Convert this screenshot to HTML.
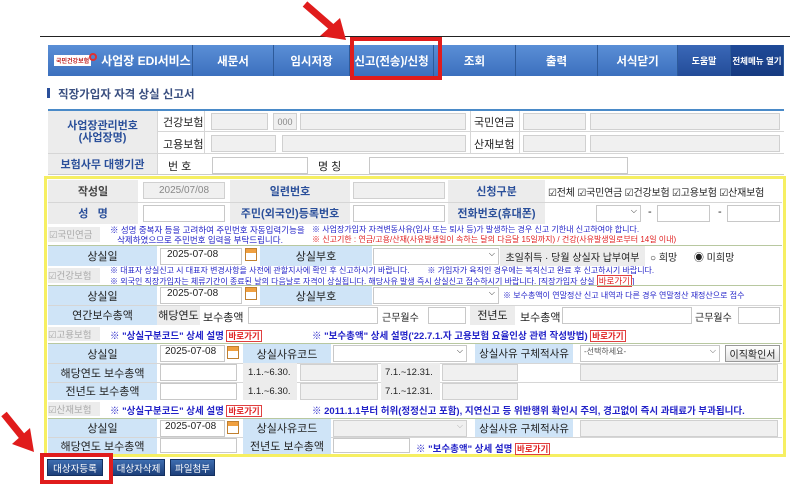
<!DOCTYPE html>
<html><head><meta charset="utf-8"><style>
*{margin:0;padding:0;box-sizing:border-box}
body{width:790px;height:484px;background:#fff;position:relative;overflow:hidden;font-family:"Liberation Sans","Noto Sans CJK KR","NanumGothic",sans-serif;font-size:11px;color:#222}
.a{position:absolute;white-space:nowrap}
.nav{top:45px;height:31px;color:#fff;font-size:11.5px;font-weight:bold;display:flex;align-items:center;justify-content:center;border-right:1px solid #2d5a9a;background:linear-gradient(#5a8fd6,#3c70be)}
.g{background:#ececec}
.lb{background:#cfe4f7}
.c{display:flex;align-items:center;justify-content:center}
.in{border:1px solid #c8c8c8;background:#fff;height:17px}
.ind{border:1px solid #d0d0d0;background:#f0f0f0;height:17px}
.bl{color:#2a4f9a;font-weight:bold}
.hl{border-bottom:1px solid #d6d6d6}
.n{font-size:8.5px;color:#2323c8;white-space:nowrap}
.r{color:#e02020}
.ck{font-size:9.5px;color:#aaa;background:#ececec}
.go{border:1px solid #e04040;color:#e02020;font-size:8.5px;padding:0 1px}
.cal{width:12px;height:13px;background:linear-gradient(#f0a040 0 4px,#fff 4px);border:1px solid #c08030}
.btn{top:459px;height:17px;color:#fff;font-size:9.5px;background:linear-gradient(#3d6db0,#1d3f7a);border:1px solid #143060}
</style></head><body>
<div class="a" style="left:40px;top:36px;width:750px;height:1px;background:#222"></div>
<div class="a nav" style="left:48px;width:145px;justify-content:flex-start;padding-left:6px">
 <span style="font-size:6px;background:#fff;color:#c02020;padding:1px 2px;margin-right:4px">국민건강보험</span><span style="width:8px;height:8px;border:2px solid #e03030;border-radius:50%;margin:-8px 4px 0 -6px"></span><span style="font-size:12px">사업장 EDI서비스</span></div>
<div class="a nav" style="left:193px;width:81px">새문서</div>
<div class="a nav" style="left:274px;width:76px">임시저장</div>
<div class="a nav" style="left:350px;width:84px">신고(전송)/신청</div>
<div class="a nav" style="left:434px;width:82px">조회</div>
<div class="a nav" style="left:516px;width:82px">출력</div>
<div class="a nav" style="left:598px;width:80px">서식닫기</div>
<div class="a nav" style="left:678px;width:53px;font-size:9px;background:linear-gradient(#3a68b8,#234c98)">도움말</div>
<div class="a nav" style="left:731px;width:53px;font-size:8.5px;background:linear-gradient(#1f4a98,#163a80)">전체메뉴 열기</div>
<div class="a" style="left:350px;top:37px;width:92px;height:43px;border:4px solid #e01c1c"></div>
<div class="a" style="left:47px;top:88px;width:3px;height:10px;background:#2a4f9a"></div>
<div class="a bl" style="left:58px;top:86px;font-size:11.5px;color:#3a4f80">직장가입자 자격 상실 신고서</div>
<div class="a" style="left:48px;top:109px;width:736px;height:66px;border-top:2px solid #4a8ac8;border-bottom:1px solid #ccc"></div>
<div class="a g c bl" style="left:48px;top:111px;width:109px;height:42px;text-align:center;line-height:12px;white-space:normal">사업장관리번호<br>(사업장명)</div>
<div class="a g c bl" style="left:48px;top:153px;width:109px;height:21px">보험사무 대행기관</div>
<div class="a hl" style="left:157px;top:131px;width:627px"></div>
<div class="a hl" style="left:48px;top:153px;width:736px"></div>
<div class="a" style="left:157px;top:111px;width:1px;height:63px;background:#d6d6d6"></div>
<div class="a" style="left:204px;top:111px;width:1px;height:42px;background:#d6d6d6"></div>
<div class="a" style="left:470px;top:111px;width:1px;height:42px;background:#d6d6d6"></div>
<div class="a" style="left:519px;top:111px;width:1px;height:42px;background:#d6d6d6"></div>
<div class="a" style="left:163px;top:114px">건강보험</div>
<div class="a" style="left:163px;top:136px">고용보험</div>
<div class="a" style="left:474px;top:114px">국민연금</div>
<div class="a" style="left:474px;top:136px">산재보험</div>
<div class="a ind" style="left:211px;top:113px;width:57px"></div>
<div class="a ind c" style="left:273px;top:113px;width:24px;font-size:9px;color:#888">000</div>
<div class="a ind" style="left:300px;top:113px;width:166px"></div>
<div class="a ind" style="left:211px;top:135px;width:65px"></div>
<div class="a ind" style="left:282px;top:135px;width:184px"></div>
<div class="a ind" style="left:523px;top:113px;width:63px"></div>
<div class="a ind" style="left:590px;top:113px;width:190px"></div>
<div class="a ind" style="left:523px;top:135px;width:63px"></div>
<div class="a ind" style="left:590px;top:135px;width:190px"></div>
<div class="a" style="left:168px;top:158px">번 호</div>
<div class="a in" style="left:212px;top:157px;width:96px"></div>
<div class="a" style="left:318px;top:158px">명 칭</div>
<div class="a in" style="left:369px;top:157px;width:259px"></div>
<div class="a" style="left:44px;top:176px;width:742px;height:281px;border:3px solid #f6ef62"></div>
<div class="a g" style="left:48px;top:180px;width:734px;height:44px"></div>
<div class="a" style="left:138px;top:180px;width:92px;height:44px;background:#fff"></div>
<div class="a" style="left:350px;top:180px;width:98px;height:44px;background:#fff"></div>
<div class="a" style="left:545px;top:180px;width:237px;height:44px;background:#fff"></div>
<div class="a hl" style="left:48px;top:202px;width:734px"></div>
<div class="a c" style="left:48px;top:180px;width:90px;height:22px;font-weight:bold;color:#444">작성일</div>
<div class="a c bl" style="left:48px;top:202px;width:90px;height:22px">성 &nbsp;&nbsp;명</div>
<div class="a ind c" style="left:143px;top:182px;width:82px;color:#888;font-size:10px">2025/07/08</div>
<div class="a in" style="left:143px;top:205px;width:82px"></div>
<div class="a c bl" style="left:230px;top:180px;width:120px;height:22px">일련번호</div>
<div class="a c bl" style="left:230px;top:202px;width:120px;height:22px">주민(외국인)등록번호</div>
<div class="a ind" style="left:353px;top:182px;width:92px"></div>
<div class="a in" style="left:353px;top:205px;width:92px"></div>
<div class="a c bl" style="left:448px;top:180px;width:97px;height:22px">신청구분</div>
<div class="a c bl" style="left:448px;top:202px;width:97px;height:22px">전화번호(휴대폰)</div>
<div class="a" style="left:548px;top:184px;font-size:10px;letter-spacing:-0.2px">☑전체 ☑국민연금 ☑건강보험 ☑고용보험 ☑산재보험</div>
<div class="a in" style="left:596px;top:205px;width:45px;font-size:8px;text-align:right;padding-right:3px">⌵</div>
<div class="a" style="left:648px;top:206px">-</div>
<div class="a in" style="left:657px;top:205px;width:53px"></div>
<div class="a" style="left:718px;top:206px">-</div>
<div class="a in" style="left:727px;top:205px;width:53px"></div>
<div class="a ck" style="left:48px;top:227px;width:52px;height:15px;padding-left:1px">☑국민연금</div>
<div class="a n" style="left:110px;top:225px;line-height:10px">※ 성명 중복자 등을 고려하여 주민번호 자동입력기능을<br>&nbsp;&nbsp;&nbsp;삭제하였으므로 주민번호 입력을 부탁드립니다.</div>
<div class="a n" style="left:312px;top:225px;line-height:10px;font-size:8px">※ 사업장가입자 자격변동사유(입사 또는 퇴사 등)가 발생하는 경우 신고 기한내 신고하여야 합니다.<br><span class="r">※ 신고기한 : 연금/고용/산재(사유발생일이 속하는 달의 다음달 15일까지) / 건강(사유발생일로부터 14일 이내)</span></div>
<div class="a" style="left:48px;top:245px;width:734px;height:1px;background:#b8c8a0"></div>
<div class="a lb c" style="left:48px;top:246px;width:109px;height:20px">상실일</div>
<div class="a in" style="left:160px;top:248px;width:82px;padding-left:6px;font-size:10px">2025-07-08</div>
<div class="a cal" style="left:245px;top:248px"></div>
<div class="a lb c" style="left:260px;top:246px;width:112px;height:20px">상실부호</div>
<div class="a in" style="left:373px;top:248px;width:126px;font-size:8px;text-align:right;padding-right:3px">⌵</div>
<div class="a g c" style="left:500px;top:246px;width:145px;height:20px;font-size:10px">초일취득 · 당월 상실자 납부여부</div>
<div class="a" style="left:650px;top:249px;font-size:10px">○ 희망 &nbsp;&nbsp;&nbsp;&nbsp; ◉ 미희망</div>
<div class="a ck" style="left:48px;top:268px;width:52px;height:15px">☑건강보험</div>
<div class="a n" style="left:110px;top:266px;line-height:10px;font-size:8px">※ 대표자 상실신고 시 대표자 변경사항을 사전에 관할지사에 확인 후 신고하시기 바랍니다. &nbsp;&nbsp;&nbsp;&nbsp;&nbsp;&nbsp;&nbsp;※ 가입자가 육직인 경우에는 복직신고 완료 후 신고하시기 바랍니다.<br>※ 외국인 직장가입자는 체류기간이 종료된 날의 다음날로 자격이 상실됩니다. 해당사유 발생 즉시 상실신고 접수하시기 바랍니다. [직장가입자 상실 <span class="go">바로가기</span>]</div>
<div class="a" style="left:48px;top:285px;width:734px;height:1px;background:#b8c8a0"></div>
<div class="a lb c" style="left:48px;top:286px;width:109px;height:19px">상실일</div>
<div class="a in" style="left:160px;top:287px;width:82px;padding-left:6px;font-size:10px">2025-07-08</div>
<div class="a cal" style="left:245px;top:287px"></div>
<div class="a lb c" style="left:260px;top:286px;width:112px;height:19px">상실부호</div>
<div class="a in" style="left:373px;top:287px;width:126px;font-size:8px;text-align:right;padding-right:3px">⌵</div>
<div class="a n" style="left:503px;top:290px;font-size:8px">※ 보수총액이 연말정산 신고 내역과 다른 경우 연말정산 재정산으로 접수</div>
<div class="a lb c" style="left:48px;top:305px;width:109px;height:20px">연간보수총액</div>
<div class="a g c" style="left:157px;top:305px;width:43px;height:20px">해당연도</div>
<div class="a" style="left:203px;top:309px">보수총액</div>
<div class="a in" style="left:248px;top:307px;width:130px"></div>
<div class="a" style="left:382px;top:309px;font-size:10px">근무월수</div>
<div class="a in" style="left:428px;top:307px;width:38px"></div>
<div class="a g c" style="left:470px;top:305px;width:45px;height:20px">전년도</div>
<div class="a" style="left:520px;top:309px">보수총액</div>
<div class="a in" style="left:562px;top:307px;width:130px"></div>
<div class="a" style="left:695px;top:309px;font-size:10px">근무월수</div>
<div class="a in" style="left:738px;top:307px;width:42px"></div>
<div class="a hl" style="left:48px;top:305px;width:734px"></div>
<div class="a ck" style="left:48px;top:327px;width:52px;height:14px">☑고용보험</div>
<div class="a n" style="left:110px;top:328px;font-size:9.5px;font-weight:bold">※ "상실구분코드" 상세 설명 <span class="go">바로가기</span></div>
<div class="a n" style="left:312px;top:328px;font-size:9.5px;font-weight:bold">※ "보수총액" 상세 설명('22.7.1.자 고용보험 요율인상 관련 작성방법) <span class="go">바로가기</span></div>
<div class="a" style="left:48px;top:343px;width:734px;height:1px;background:#b8c8a0"></div>
<div class="a lb c" style="left:48px;top:344px;width:109px;height:19px">상실일</div>
<div class="a lb c" style="left:48px;top:363px;width:109px;height:19px">해당연도 보수총액</div>
<div class="a lb c" style="left:48px;top:382px;width:109px;height:18px">전년도 보수총액</div>
<div class="a in" style="left:160px;top:345px;width:65px;padding-left:4px;font-size:10px">2025-07-08</div>
<div class="a cal" style="left:227px;top:346px"></div>
<div class="a lb c" style="left:243px;top:344px;width:88px;height:19px">상실사유코드</div>
<div class="a in" style="left:333px;top:345px;width:134px;font-size:8px;text-align:right;padding-right:3px">⌵</div>
<div class="a lb c" style="left:475px;top:344px;width:98px;height:19px;font-size:10.5px">상실사유 구체적사유</div>
<div class="a in" style="left:580px;top:345px;width:140px;font-size:8px;padding-left:3px;color:#555">-선택하세요- <span style="float:right;padding-right:3px">⌵</span></div>
<div class="a c" style="left:725px;top:345px;width:55px;height:17px;border:1px solid #999;background:linear-gradient(#fff,#e0e0e0);font-size:10px">이직확인서</div>
<div class="a hl" style="left:48px;top:363px;width:734px"></div>
<div class="a hl" style="left:48px;top:382px;width:734px"></div>
<div class="a in" style="left:160px;top:364px;width:77px"></div>
<div class="a in" style="left:160px;top:383px;width:77px"></div>
<div class="a g c" style="left:243px;top:363px;width:54px;height:37px"></div>
<div class="a" style="left:248px;top:367px;font-size:9.5px">1.1.~6.30.</div>
<div class="a" style="left:248px;top:386px;font-size:9.5px">1.1.~6.30.</div>
<div class="a ind" style="left:300px;top:364px;width:78px"></div>
<div class="a ind" style="left:300px;top:383px;width:78px"></div>
<div class="a g" style="left:381px;top:363px;width:59px;height:37px"></div>
<div class="a" style="left:385px;top:367px;font-size:9.5px">7.1.~12.31.</div>
<div class="a" style="left:385px;top:386px;font-size:9.5px">7.1.~12.31.</div>
<div class="a ind" style="left:442px;top:364px;width:76px"></div>
<div class="a ind" style="left:442px;top:383px;width:76px"></div>
<div class="a ind" style="left:580px;top:364px;width:198px"></div>
<div class="a ck" style="left:48px;top:402px;width:52px;height:14px">☑산재보험</div>
<div class="a n" style="left:110px;top:403px;font-size:9.5px;font-weight:bold">※ "상실구분코드" 상세 설명 <span class="go">바로가기</span></div>
<div class="a n" style="left:312px;top:403px;font-size:9.5px;font-weight:bold">※ 2011.1.1부터 허위(정정신고 포함), 지연신고 등 위반행위 확인시 주의, 경고없이 즉시 과태료가 부과됩니다.</div>
<div class="a" style="left:48px;top:418px;width:734px;height:1px;background:#b8c8a0"></div>
<div class="a lb c" style="left:48px;top:419px;width:109px;height:18px">상실일</div>
<div class="a lb c" style="left:48px;top:437px;width:109px;height:17px">해당연도 보수총액</div>
<div class="a in" style="left:160px;top:420px;width:65px;padding-left:4px;font-size:10px">2025-07-08</div>
<div class="a cal" style="left:227px;top:421px"></div>
<div class="a lb c" style="left:243px;top:419px;width:88px;height:18px">상실사유코드</div>
<div class="a ind" style="left:333px;top:420px;width:134px;font-size:8px;text-align:right;padding-right:3px;color:#aaa">⌵</div>
<div class="a lb c" style="left:475px;top:419px;width:98px;height:18px;font-size:10.5px">상실사유 구체적사유</div>
<div class="a ind" style="left:580px;top:420px;width:198px"></div>
<div class="a hl" style="left:48px;top:437px;width:734px"></div>
<div class="a in" style="left:160px;top:438px;width:77px;height:15px"></div>
<div class="a lb c" style="left:243px;top:437px;width:88px;height:17px">전년도 보수총액</div>
<div class="a in" style="left:333px;top:438px;width:77px;height:15px"></div>
<div class="a n" style="left:416px;top:441px;font-size:9.5px;font-weight:bold">※ "보수총액" 상세 설명 <span class="go">바로가기</span></div>
<div class="a btn c" style="left:47px;width:56px">대상자등록</div>
<div class="a btn c" style="left:112px;width:53px">대상자삭제</div>
<div class="a btn c" style="left:170px;width:45px">파일첨부</div>
<div class="a" style="left:40px;top:453px;width:73px;height:31px;border:4px solid #e01c1c"></div>
<svg class="a" style="left:0;top:0" width="790" height="484">
 <line x1="305" y1="4" x2="335" y2="30" stroke="#e01c1c" stroke-width="7"/>
 <polygon points="346,40 320,36 340,18" fill="#e01c1c"/>
 <line x1="4" y1="414" x2="25" y2="440" stroke="#e01c1c" stroke-width="7"/>
 <polygon points="34,452 12,444 30,428" fill="#e01c1c"/>
</svg>
</body></html>
